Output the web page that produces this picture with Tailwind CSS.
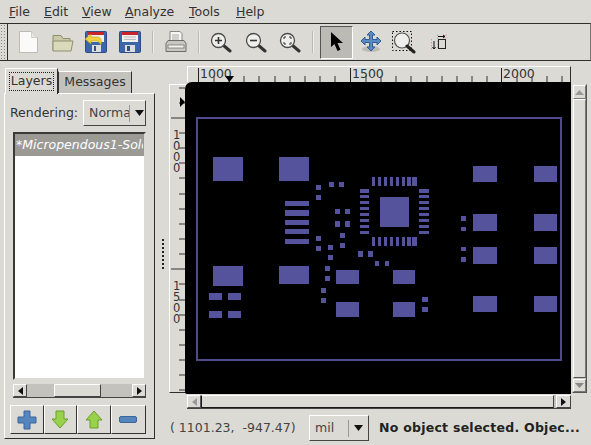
<!DOCTYPE html>
<html lang="en">
<head>
    <meta charset="UTF-8">
    <title>gerbv</title>
    <script src="https://cdn.jsdelivr.net/npm/@tailwindcss/browser@4"></script>
</head>
<body class="w-[591px] h-[445px] overflow-hidden bg-[#dcdad5] text-[#1a1a1a] text-[12px] leading-none font-['DejaVu_Sans',sans-serif]">
<div class="relative w-[591px] h-[445px] flex flex-col">

    <!-- menu -->
    <div class="h-[23px] flex items-center pl-[9px] pt-[1px] text-[#333] text-[12.5px]">
        <span class="w-[35px]"><u>F</u>ile</span>
        <span class="w-[38px]"><u>E</u>dit</span>
        <span class="w-[43px]"><u>V</u>iew</span>
        <span class="w-[64px]"><u>A</u>nalyze</span>
        <span class="w-[47px]"><u>T</u>ools</span>
        <span><u>H</u>elp</span>
    </div>

    <!-- toolbar -->
    <div class="h-[38px] flex items-center border-y border-y-[#2e2e2c] border-r border-r-[#77756f]">
        <div class="w-[8px] h-full border-r border-r-[#2e2e2c] bg-[radial-gradient(#8a8880_1px,transparent_1px)] bg-[length:3px_3px]"></div>
        <!-- new -->
        <svg class="ml-[10px]" width="21" height="24" viewBox="0 0 21 24"><path d="M1.5 1.500h12l6 6v15h-18z" fill="#fafaf8" stroke="#bdbbb4"/><path d="M13.500 1.500v6h6" fill="#e4e4e0" stroke="#cfcdc6"/></svg>
        <!-- open -->
        <svg class="ml-[13px]" width="22" height="19" viewBox="0 0 22 19"><path d="M1 2.500h8l2 3h7v12h-17z" fill="#c9c9a5" stroke="#8e8e70"/><path d="M1 8h20l-2 10h-18z" fill="#dadabb" stroke="#8e8e70"/></svg>
        <!-- revert -->
        <svg class="ml-[11px]" width="22" height="22" viewBox="0 0 22 22"><rect x=".5" y=".5" width="21" height="21" rx="1" fill="#3d66a8" stroke="#2b4d87"/><rect x="3" y="1" width="16" height="3" fill="#c8242b"/><rect x="3" y="4" width="16" height="7" fill="#f2f0ea"/><rect x="7" y="14" width="9" height="7" fill="#ddd"/><rect x="9" y="15" width="2" height="5" fill="#33517f"/><path d="M0 8l6-5v3h6c4 0 5 3 4 8l-3-4h-7v3z" fill="#f2cf3e" stroke="#b99a1e" stroke-width=".6"/></svg>
        <!-- save -->
        <svg class="ml-[12px]" width="22" height="22" viewBox="0 0 22 22"><rect x=".5" y=".5" width="21" height="21" rx="1" fill="#3d66a8" stroke="#2b4d87"/><rect x="3" y="1" width="16" height="3" fill="#c8242b"/><rect x="3" y="4" width="16" height="7" fill="#f2f0ea"/><path d="M5 6h12M5 8.500h12" stroke="#b9b9c4"/><rect x="6" y="14" width="10" height="7" fill="#ddd"/><rect x="8" y="15" width="3" height="5" fill="#33517f"/></svg>
        <div class="ml-[11px] w-[2px] h-[22px] bg-[#f0eeea] border-l border-l-[#bcbab5]"></div>
        <!-- print -->
        <svg class="ml-[11px]" width="22" height="22" viewBox="0 0 22 22"><path d="M5 .5h10l2 2v8h-12z" fill="#f5f5f2" stroke="#88867f"/><path d="M7 4h7M7 6h7M7 8h7" stroke="#aaa"/><path d="M3 9.500h16l2 3v8h-20v-8z" fill="#c8c8c2" stroke="#6e6c66"/><rect x="3" y="14" width="16" height="3" fill="#f2f2ee" stroke="#6e6c66" stroke-width=".7"/></svg>
        <div class="ml-[11px] w-[2px] h-[22px] bg-[#f0eeea] border-l border-l-[#bcbab5]"></div>
        <!-- zoom in -->
        <svg class="ml-[10px]" width="22" height="21" viewBox="0 0 22 21"><path d="M13 13l7 6" stroke="#333" stroke-width="3" stroke-linecap="round"/><circle cx="8.500" cy="8.500" r="7" fill="#efefec" stroke="#4b4b48" stroke-width="1.300"/><path d="M5 8.500h7M8.500 5v7" stroke="#333" stroke-width="1.600"/></svg>
        <!-- zoom out -->
        <svg class="ml-[13px]" width="22" height="21" viewBox="0 0 22 21"><path d="M13 13l7 6" stroke="#333" stroke-width="3" stroke-linecap="round"/><circle cx="8.500" cy="8.500" r="7" fill="#efefec" stroke="#4b4b48" stroke-width="1.300"/><path d="M5 8.500h7" stroke="#333" stroke-width="1.600"/></svg>
        <!-- zoom fit -->
        <svg class="ml-[12px]" width="22" height="21" viewBox="0 0 22 21"><path d="M13 13l7 6" stroke="#333" stroke-width="3" stroke-linecap="round"/><circle cx="8.500" cy="8.500" r="7" fill="#efefec" stroke="#4b4b48" stroke-width="1.300"/><path d="M5 7V5h2M10 5h2v2M12 10v2h-2M7 12H5v-2" fill="none" stroke="#333"/></svg>
        <div class="ml-[11px] w-[2px] h-[22px] bg-[#f0eeea] border-l border-l-[#bcbab5]"></div>
        <!-- pointer, active -->
        <div class="ml-[6px] w-[33px] h-[33px] flex items-center justify-center bg-[#bcbab5] border border-t-[#555] border-l-[#555] border-r-white border-b-white">
            <svg width="14" height="20" viewBox="0 0 14 20"><path d="M1 0v15l3.500-3 3 7 3-1.200-3-6.800h5.500z" fill="#000"/></svg>
        </div>
        <!-- move -->
        <svg class="ml-[7px]" width="22" height="24" viewBox="0 0 22 24"><ellipse cx="11" cy="19" rx="9" ry="3" fill="#bcbab5"/><path d="M11 1l4 4h-2.500v4.500H17V7l4 4-4 4v-2.500h-4.500V17H15l-4 4-4-4h2.500v-4.500H5V15l-4-4 4-4v2.500h4.500V5H7z" fill="#5b8ac2" stroke="#2f5d96"/></svg>
        <!-- zoom region -->
        <svg class="ml-[10px]" width="24" height="23" viewBox="0 0 24 23"><rect x=".5" y=".5" width="19" height="19" fill="none" stroke="#111" stroke-dasharray="1.500 2"/><circle cx="10" cy="9.500" r="7.500" fill="#eeeeec" stroke="#55534e" stroke-width="1.200"/><path d="M15 15l7 6" stroke="#222" stroke-width="3" stroke-linecap="round"/></svg>
        <!-- measure -->
        <svg class="ml-[15px]" width="16" height="17" viewBox="0 0 16 17"><path d="M.500 5v12M6.500 .500v15M15 .5v4" stroke="#f08aa0" stroke-dasharray="1.500 1.500" fill="none"/><rect x="7.500" y="5.500" width="7" height="9" fill="none" stroke="#222"/><path d="M7 2.500h7M12 1l2 1.500L12 4M3 7v8M1.500 13L3 15l1.500-2" fill="none" stroke="#111"/></svg>
    </div>

    <!-- main -->
    <div class="flex-1 flex min-h-0">
        <!-- left panel -->
        <div class="w-[155px] pl-[4px] pt-[6px] flex flex-col">
            <div class="flex items-end h-[26px] pl-[1px]">
                <div class="h-[26px] w-[53px] flex items-start justify-center pt-[3px] bg-[#dcdad5] border border-b-0 border-t-white border-l-white border-r-[#2e2e2c] relative z-10 -mb-[1px]">
                    <span class="px-[1px] py-[2px] border border-dotted border-[#222] text-[#333] text-[12.500px]">Layers</span>
                </div>
                <div class="h-[22px] w-[74px] flex items-center justify-center bg-[#c4c2bd] border border-b-0 border-t-white border-r-[#2e2e2c] text-[#333] text-[12.500px]">Messages</div>
            </div>
            <div class="w-[151px] h-[346px] border border-t-white border-l-white border-r-[#2e2e2c] border-b-[#2e2e2c] flex flex-col px-[8px]">
                <div class="h-[38px] flex items-center -ml-[3px]">
                    <span class="text-[#333] text-[12.500px]">Rendering:</span>
                    <div class="ml-[5px] w-[66px] h-[26px] flex items-center border border-t-white border-l-white border-r-[#444] border-b-[#444] pl-[5px] overflow-hidden text-[#444] text-[12.500px]">
                        <span class="w-[40px] overflow-hidden">Norma</span>
                        <span class="h-[17px] w-px bg-white border-l border-l-[#999]"></span>
                        <svg class="ml-[4px]" width="11" height="6" viewBox="0 0 11 6"><path d="M1 0h9L5.500 6z" fill="#111"/></svg>
                    </div>
                </div>
                <!-- layer list -->
                <div class="w-[133px] h-[248px] bg-white border-2 border-t-[#3a3a38] border-l-[#3a3a38] border-r-[#dcdad5] border-b-[#dcdad5]">
                    <div class="h-[22px] bg-[#9c9a94] flex items-center pl-[1px] text-white italic overflow-hidden text-[12.500px]"><span class="w-[127px] shrink-0 overflow-hidden whitespace-nowrap">*Micropendous1-Sold</span></div>
                </div>
                <!-- list scrollbar -->
                <div class="mt-[4px] w-[133px] h-[14px] flex bg-[#c4c2bd] border-b border-b-[#444]">
                    <div class="w-[14px] flex items-center justify-center bg-[#dcdad5] border border-t-white border-l-white border-r-[#444] border-b-[#444]"><svg width="5" height="8" viewBox="0 0 5 8"><path d="M5 0v8L0 4z" fill="#111"/></svg></div>
                    <div class="ml-[27px] w-[47px] bg-[#dcdad5] border border-t-white border-l-white border-r-[#444] border-b-[#444]"></div>
                    <div class="ml-auto w-[14px] flex items-center justify-center bg-[#dcdad5] border border-t-white border-l-white border-r-[#444] border-b-[#444]"><svg width="5" height="8" viewBox="0 0 5 8"><path d="M0 0v8l5-4z" fill="#111"/></svg></div>
                </div>
                <!-- layer buttons -->
                <div class="mt-[7px] -ml-[3px] flex h-[29px]">
                    <div class="w-[34px] flex items-center justify-center border border-t-white border-l-white border-r-[#333] border-b-[#333]"><svg width="20" height="20" viewBox="0 0 20 20"><path d="M7 1h6v6h6v6h-6v6H7v-6H1V7h6z" fill="#5585bd" stroke="#3b659a"/></svg></div>
                    <div class="w-[34px] flex items-center justify-center border border-t-white border-l-white border-r-[#333] border-b-[#333]"><svg width="18" height="19" viewBox="0 0 18 19"><path d="M5 1h8v8h4l-8 9-8-9h4z" fill="#98d24a" stroke="#6a9e2c"/></svg></div>
                    <div class="w-[34px] flex items-center justify-center border border-t-white border-l-white border-r-[#333] border-b-[#333]"><svg width="18" height="19" viewBox="0 0 18 19"><path d="M5 18h8v-8h4L9 1l-8 9h4z" fill="#98d24a" stroke="#6a9e2c"/></svg></div>
                    <div class="w-[36px] flex items-center justify-center border border-t-white border-l-white border-r-[#333] border-b-[#333]"><svg width="18" height="7" viewBox="0 0 18 7"><rect x=".5" y=".5" width="17" height="6" rx="1.500" fill="#5585bd" stroke="#3b659a"/></svg></div>
                </div>
            </div>
        </div>

        <!-- pane handle -->
        <div class="w-[14px] flex flex-col items-center justify-center pt-[2px] gap-[2px] pl-[1px]">
            <span class="w-[2px] h-[2px] bg-[#222]"></span><span class="w-[2px] h-[2px] bg-[#222]"></span><span class="w-[2px] h-[2px] bg-[#222]"></span><span class="w-[2px] h-[2px] bg-[#222]"></span><span class="w-[2px] h-[2px] bg-[#222]"></span><span class="w-[2px] h-[2px] bg-[#222]"></span><span class="w-[2px] h-[2px] bg-[#222]"></span><span class="w-[2px] h-[2px] bg-[#222]"></span>
        </div>

        <!-- drawing area -->
        <div class="flex-1 flex flex-col">
            <!-- top ruler -->
            <div class="relative mt-[5px] ml-[18px] w-[384px] h-[16px] border-t border-l border-t-white border-l-white border-r border-r-[#2e2e2c] text-[#333] text-[12.500px]">
                <span class="absolute left-[10px] top-[1px] border-l border-l-[#222] pl-[1px] h-[15px]">1000</span>
                <span class="absolute left-[162px] top-[1px] border-l border-l-[#222] pl-[1px] h-[15px]">1500</span>
                <span class="absolute left-[313px] top-[1px] border-l border-l-[#222] pl-[1px] h-[15px]">2000</span>
                <svg class="absolute left-0 top-0" width="383" height="16" viewBox="187 67 383 16"><path d="M213 76v6M228 76v6M243 76v6M258 76v6M274 76v6M289 76v6M304 76v6M319 76v6M334 76v6M365 76v6M380 76v6M395 76v6M410 76v6M426 76v6M441 76v6M456 76v6M471 76v6M486 76v6M516 76v6M531 76v6M546 76v6M561 76v6" stroke="#333" fill="none"/><path d="M224 76h9l-4.500 6z" fill="#000"/></svg>
            </div>
            <!-- ruler + canvas + scrollbar -->
            <div class="mt-[2px] flex h-[310px]">
                <div class="relative w-[17px] h-[309px] border-l border-l-white border-t border-t-white border-b border-b-[#2e2e2c] text-[#333] text-[11.500px]">
                    <div class="absolute left-[3px] top-[45px] flex flex-col leading-[11px] text-center"><span>1</span><span>0</span><span>0</span><span>0</span></div>
                    <div class="absolute left-[3px] top-[196px] flex flex-col leading-[11px] text-center"><span>1</span><span>5</span><span>0</span><span>0</span></div>
                    <svg class="absolute left-0 top-0" width="16" height="307" viewBox="170 85 16 307"><path d="M179 88h6M179 103h6M171 118h14M179 133h6M179 148h6M179 163h6M179 178h6M179 194h6M179 209h6M179 224h6M179 239h6M179 254h6M171 269h14M179 284h6M179 300h6M179 315h6M179 330h6M179 345h6M179 360h6M179 375h6M179 390h6" stroke="#333" fill="none"/><path d="M180 97v10l5-5z" fill="#000"/></svg>
                </div>
                <div class="w-[386px]"></div>
                <!-- vertical scrollbar -->
                <div class="w-[15px] h-[309px] flex flex-col bg-[#c4c2bd] border border-[#555] border-t-[#dcdad5] border-l-[#dcdad5]">
                    <div class="h-[14px] flex items-center justify-center bg-[#dcdad5] border border-t-white border-l-white border-r-[#777] border-b-[#777]"><svg width="9" height="5" viewBox="0 0 9 5"><path d="M0 5h9L4.500 0z" fill="#999"/></svg></div>
                    <div class="flex-1 bg-[#dcdad5] border border-t-white border-l-white border-r-[#777] border-b-[#555]"></div>
                    <div class="h-[13px] mt-[1px] flex items-center justify-center bg-[#dcdad5] border border-t-white border-l-white border-r-[#777] border-b-[#777]"><svg width="9" height="5" viewBox="0 0 9 5"><path d="M0 0h9L4.500 5z" fill="#888"/></svg></div>
                </div>
            </div>
            <!-- horizontal scrollbar -->
            <div class="mt-[1px] ml-[18px] w-[384px] h-[14px] flex bg-[#c4c2bd] border-b border-b-[#444]">
                <div class="w-[14px] flex items-center justify-center bg-[#dcdad5] border border-t-white border-l-white border-r-[#555] border-b-[#555]"><svg width="5" height="8" viewBox="0 0 5 8"><path d="M5 0v8L0 4z" fill="#999"/></svg></div>
                <div class="w-[353px] bg-[#dcdad5] border border-t-white border-r-[#444]"></div>
                <div class="ml-[2px] w-[15px] flex items-center justify-center bg-[#dcdad5] border border-t-white border-l-white border-r-[#444] border-b-[#444]"><svg width="5" height="8" viewBox="0 0 5 8"><path d="M0 0v8l5-4z" fill="#111"/></svg></div>
            </div>
            <!-- status -->
            <div class="flex items-center mt-[6px] h-[26px] text-[12.500px]">
                <span class="w-[140px] pl-[1px] text-[#444] whitespace-pre">( 1101.23,  -947.47)</span>
                <div class="w-[60px] h-[26px] flex items-center border border-t-white border-l-white border-r-[#444] border-b-[#444] pl-[5px] text-[#444]">
                    <span class="w-[33px]">mil</span>
                    <span class="h-[17px] w-px bg-white border-l border-l-[#999]"></span>
                    <svg class="ml-[4px]" width="11" height="6" viewBox="0 0 11 6"><path d="M1 0h9L5.500 6z" fill="#111"/></svg>
                </div>
                <span class="ml-[10px] font-bold whitespace-nowrap text-[#222] tracking-[0.25px]">No object selected. Objec...</span>
            </div>
        </div>
    </div>

    <!-- canvas redraws over the rulers -->
    <svg class="absolute left-[185px] top-[82px] rounded-tl-[7px] rounded-bl-[2px]" width="386" height="312" viewBox="185 82 386 312">
        <rect x="185" y="82" width="386" height="312" fill="#000"/>
        <rect x="197" y="118" width="364" height="242" fill="none" stroke="#4d4b8c" stroke-width="2"/>
        <g fill="#55539b">
            <rect x="213" y="157" width="30" height="24"/><rect x="279" y="157" width="30" height="24"/>
            <rect x="285" y="201" width="24" height="5"/><rect x="285" y="210" width="24" height="6"/><rect x="285" y="220" width="24" height="5"/><rect x="285" y="229" width="24" height="5"/><rect x="285" y="239" width="24" height="5"/>
            <rect x="316" y="185" width="5" height="5"/><rect x="316" y="195" width="5" height="5"/><rect x="329" y="182" width="5" height="5"/><rect x="339" y="182" width="5" height="5"/>
            <rect x="335" y="209" width="5" height="5"/><rect x="345" y="209" width="5" height="5"/><rect x="335" y="221" width="5" height="6"/><rect x="345" y="221" width="5" height="6"/>
            <rect x="316" y="236" width="5" height="5"/><rect x="316" y="246" width="5" height="5"/><rect x="340" y="233" width="5" height="5"/><rect x="340" y="243" width="5" height="5"/>
            <rect x="328" y="245" width="5" height="5"/><rect x="328" y="255" width="5" height="5"/><rect x="325" y="266" width="5" height="5"/><rect x="325" y="276" width="5" height="5"/><rect x="321" y="288" width="5" height="5"/><rect x="321" y="298" width="5" height="5"/>
            <rect x="213" y="266" width="30" height="20"/><rect x="279" y="266" width="30" height="18"/><rect x="336" y="270" width="23" height="14"/><rect x="336" y="302" width="23" height="15"/>
            <rect x="393" y="270" width="22" height="14"/><rect x="393" y="302" width="22" height="15"/>
            <rect x="209" y="293" width="13" height="7"/><rect x="228" y="293" width="13" height="7"/><rect x="209" y="311" width="13" height="7"/><rect x="228" y="311" width="13" height="7"/>
            <rect x="380" y="197" width="29" height="30"/>
            <rect x="360" y="189" width="9" height="4"/><rect x="360" y="195" width="9" height="3"/><rect x="360" y="201" width="9" height="3"/><rect x="360" y="207" width="9" height="3"/><rect x="360" y="213" width="9" height="3"/><rect x="360" y="219" width="9" height="3"/><rect x="360" y="225" width="9" height="3"/><rect x="360" y="231" width="9" height="3"/>
            <rect x="419" y="189" width="10" height="4"/><rect x="419" y="195" width="10" height="3"/><rect x="419" y="201" width="10" height="3"/><rect x="419" y="207" width="10" height="3"/><rect x="419" y="213" width="10" height="3"/><rect x="419" y="219" width="10" height="3"/><rect x="419" y="225" width="10" height="3"/><rect x="419" y="231" width="10" height="3"/>
            <rect x="372" y="177" width="3" height="9"/><rect x="378" y="177" width="3" height="9"/><rect x="384" y="177" width="3" height="9"/><rect x="390" y="177" width="3" height="9"/><rect x="396" y="177" width="3" height="9"/><rect x="402" y="177" width="3" height="9"/><rect x="407" y="177" width="4" height="9"/><rect x="412" y="177" width="5" height="9"/>
            <rect x="372" y="237" width="3" height="9"/><rect x="378" y="237" width="3" height="9"/><rect x="384" y="237" width="3" height="9"/><rect x="390" y="237" width="3" height="9"/><rect x="396" y="237" width="3" height="9"/><rect x="402" y="237" width="3" height="9"/><rect x="407" y="237" width="4" height="9"/><rect x="412" y="237" width="5" height="9"/>
            <rect x="358" y="251" width="5" height="6"/><rect x="368" y="251" width="5" height="6"/><rect x="375" y="261" width="4" height="5"/><rect x="385" y="261" width="4" height="5"/>
            <rect x="461" y="216" width="5" height="5"/><rect x="461" y="227" width="5" height="4"/><rect x="461" y="247" width="5" height="4"/><rect x="461" y="257" width="5" height="5"/>
            <rect x="422" y="297" width="6" height="5"/><rect x="422" y="307" width="6" height="5"/>
            <rect x="473" y="166" width="24" height="16"/><rect x="473" y="214" width="24" height="17"/><rect x="473" y="247" width="24" height="17"/><rect x="473" y="296" width="24" height="16"/>
            <rect x="534" y="166" width="23" height="16"/><rect x="534" y="214" width="23" height="17"/><rect x="534" y="247" width="23" height="17"/><rect x="534" y="296" width="23" height="16"/>
        </g>
    </svg>
</div>
</body>
</html>
